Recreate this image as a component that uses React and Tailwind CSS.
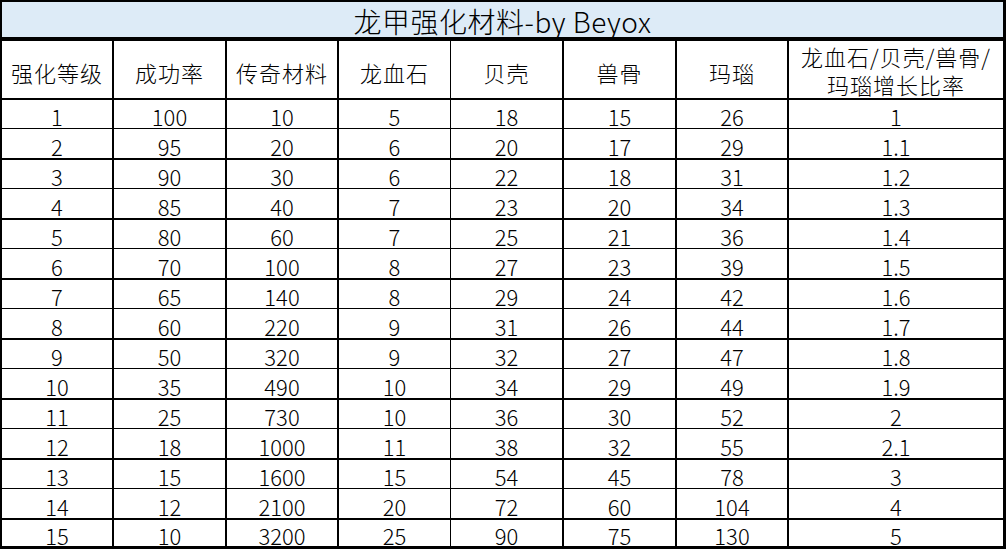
import React from "react";

const colClasses = [
  "w-[112px] border-r-2",
  "w-[113px] border-r-2",
  "w-[112px] border-r-2",
  "w-[112px] border-r",
  "w-[113px] border-r-2",
  "w-[113px] border-r-2",
  "w-[112px] border-r-2",
  "w-[214px]",
];

const headers = ["强化等级", "成功率", "传奇材料", "龙血石", "贝壳", "兽骨", "玛瑙"];

const data = [
  [1, 100, 10, 5, 18, 15, 26, "1"],
  [2, 95, 20, 6, 20, 17, 29, "1.1"],
  [3, 90, 30, 6, 22, 18, 31, "1.2"],
  [4, 85, 40, 7, 23, 20, 34, "1.3"],
  [5, 80, 60, 7, 25, 21, 36, "1.4"],
  [6, 70, 100, 8, 27, 23, 39, "1.5"],
  [7, 65, 140, 8, 29, 24, 42, "1.6"],
  [8, 60, 220, 9, 31, 26, 44, "1.7"],
  [9, 50, 320, 9, 32, 27, 47, "1.8"],
  [10, 35, 490, 10, 34, 29, 49, "1.9"],
  [11, 25, 730, 10, 36, 30, 52, "2"],
  [12, 18, 1000, 11, 38, 32, 55, "2.1"],
  [13, 15, 1600, 15, 54, 45, 78, "3"],
  [14, 12, 2100, 20, 72, 60, 104, "4"],
  [15, 10, 3200, 25, 90, 75, 130, "5"],
];

function rowClass(i) {
  if (i === data.length - 1) return "h-[26px]";
  return i % 2 === 0 ? "h-[29px] border-b" : "h-[31px] border-b-2";
}

export default function App() {
  return (
    <div
      className="w-[1006px] bg-white text-black font-light border-black border-l-2 border-r-[3px] border-t-2 border-b-[3px]"
      style={{ fontFamily: '"Noto Sans CJK SC", "Noto Sans", sans-serif' }}
    >
      <div className="h-[39px] bg-[#ddebf7] border-b-4 border-black flex items-center justify-center pt-[3px] text-[28px] leading-none tracking-[0.5px]">
        龙甲强化材料-by Beyox
      </div>
      <div className="h-[59px] border-b-2 border-black flex">
        {headers.map((h, i) => (
          <div
            key={i}
            className={`${colClasses[i]} border-black flex items-center justify-center pt-[4px] text-[22px] leading-none tracking-[1px]`}
          >
            {h}
          </div>
        ))}
        <div className={`${colClasses[7]} border-black flex flex-col items-center justify-center pt-[1px] text-[22px] leading-none tracking-[1px] gap-[6px]`}>
          <div>龙血石/贝壳/兽骨/</div>
          <div>玛瑙增长比率</div>
        </div>
      </div>
      {data.map((row, r) => (
        <div key={r} className={`${rowClass(r)} border-black flex`}>
          {row.map((v, c) => (
            <div
              key={c}
              className={`${colClasses[c]} border-black flex items-center justify-center pt-[4px] text-[22px] leading-none`}
            >
              {v}
            </div>
          ))}
        </div>
      ))}
    </div>
  );
}
